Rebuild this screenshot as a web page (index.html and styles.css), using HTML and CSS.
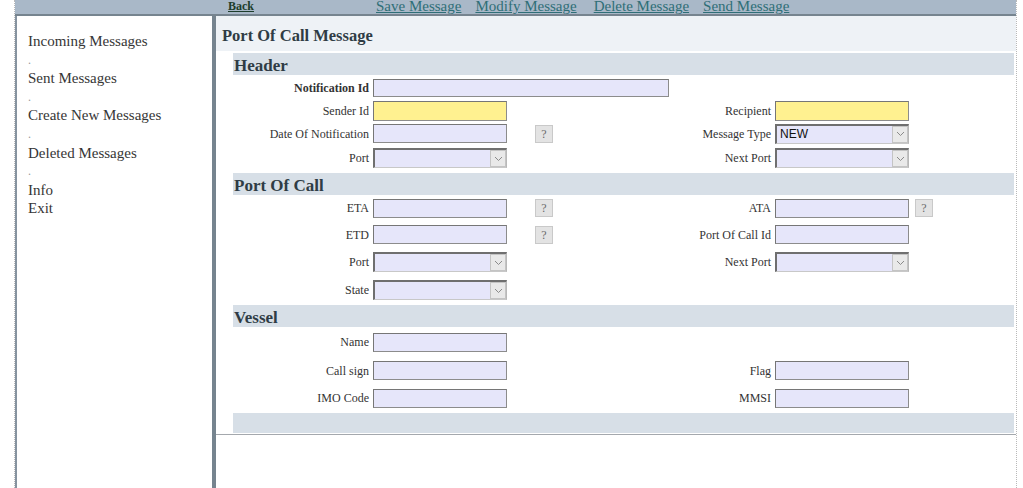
FILE: index.html
```html
<!DOCTYPE html>
<html lang="en">
<head>
<meta charset="utf-8">
<title>Port Of Call Message</title>
<link rel="stylesheet" href="styles.css">
</head>
<body>
<div class="page">
  <div class="topbar">
    <a class="nav-back" href="#">Back</a>
    <nav class="nav-actions">
      <a class="nav-link" href="#">Save Message</a>
      <a class="nav-link" href="#">Modify Message</a>
      <a class="nav-link nav-link-wide" href="#">Delete Message</a>
      <a class="nav-link" href="#">Send Message</a>
    </nav>
  </div>
  <div class="layout">
    <aside class="sidebar">
      <a class="side-item" href="#">Incoming Messages</a>
      <span class="side-dot">.</span>
      <a class="side-item" href="#">Sent Messages</a>
      <span class="side-dot">.</span>
      <a class="side-item" href="#">Create New Messages</a>
      <span class="side-dot">.</span>
      <a class="side-item" href="#">Deleted Messages</a>
      <span class="side-dot">.</span>
      <a class="side-item" href="#">Info</a>
      <a class="side-item" href="#">Exit</a>
    </aside>
    <main class="main">
      <div class="title-band"><h1 class="title">Port Of Call Message</h1></div>
      <div class="form">
        <section class="section">
          <h2 class="section-bar">Header</h2>
          <div class="fields rows-header">
            <label class="c-label1 strong">Notification Id</label>
            <input class="c-input1 field field-long" type="text">

            <label class="c-label1">Sender Id</label>
            <input class="c-input1 field field-req" type="text">
            <label class="c-label2">Recipient</label>
            <input class="c-input2 field field-req" type="text">

            <label class="c-label1">Date Of Notification</label>
            <input class="c-input1 field" type="text">
            <button class="c-help1 help" type="button">?</button>
            <label class="c-label2">Message Type</label>
            <div class="c-input2 select"><span class="select-value">NEW</span><span class="select-arrow"><svg width="9" height="6" viewBox="0 0 9 6"><path d="M1 1 L4.5 4.5 L8 1" fill="none" stroke="#8a8a8a" stroke-width="1"/></svg></span></div>

            <label class="c-label1">Port</label>
            <div class="c-input1 select"><span class="select-value"></span><span class="select-arrow"><svg width="9" height="6" viewBox="0 0 9 6"><path d="M1 1 L4.5 4.5 L8 1" fill="none" stroke="#8a8a8a" stroke-width="1"/></svg></span></div>
            <label class="c-label2">Next Port</label>
            <div class="c-input2 select"><span class="select-value"></span><span class="select-arrow"><svg width="9" height="6" viewBox="0 0 9 6"><path d="M1 1 L4.5 4.5 L8 1" fill="none" stroke="#8a8a8a" stroke-width="1"/></svg></span></div>
          </div>
        </section>

        <section class="section section-port">
          <h2 class="section-bar">Port Of Call</h2>
          <div class="fields rows-port">
            <label class="c-label1">ETA</label>
            <input class="c-input1 field" type="text">
            <button class="c-help1 help" type="button">?</button>
            <label class="c-label2">ATA</label>
            <input class="c-input2 field" type="text">
            <button class="c-help2 help" type="button">?</button>

            <label class="c-label1">ETD</label>
            <input class="c-input1 field" type="text">
            <button class="c-help1 help" type="button">?</button>
            <label class="c-label2">Port Of Call Id</label>
            <input class="c-input2 field" type="text">

            <label class="c-label1">Port</label>
            <div class="c-input1 select"><span class="select-value"></span><span class="select-arrow"><svg width="9" height="6" viewBox="0 0 9 6"><path d="M1 1 L4.5 4.5 L8 1" fill="none" stroke="#8a8a8a" stroke-width="1"/></svg></span></div>
            <label class="c-label2">Next Port</label>
            <div class="c-input2 select"><span class="select-value"></span><span class="select-arrow"><svg width="9" height="6" viewBox="0 0 9 6"><path d="M1 1 L4.5 4.5 L8 1" fill="none" stroke="#8a8a8a" stroke-width="1"/></svg></span></div>

            <label class="c-label1">State</label>
            <div class="c-input1 select"><span class="select-value"></span><span class="select-arrow"><svg width="9" height="6" viewBox="0 0 9 6"><path d="M1 1 L4.5 4.5 L8 1" fill="none" stroke="#8a8a8a" stroke-width="1"/></svg></span></div>
          </div>
        </section>

        <section class="section section-vessel">
          <h2 class="section-bar">Vessel</h2>
          <div class="fields rows-vessel">
            <label class="c-label1">Name</label>
            <input class="c-input1 field" type="text">

            <label class="c-label1">Call sign</label>
            <input class="c-input1 field" type="text">
            <label class="c-label2">Flag</label>
            <input class="c-input2 field" type="text">

            <label class="c-label1">IMO Code</label>
            <input class="c-input1 field" type="text">
            <label class="c-label2">MMSI</label>
            <input class="c-input2 field" type="text">
          </div>
        </section>

        <div class="footer-bar"></div>
      </div>
    </main>
  </div>
</div>
</body>
</html>
```

FILE: styles.css
```css
* { box-sizing: border-box; }

html, body {
  margin: 0;
  padding: 0;
  background: #ffffff;
}

body {
  font-family: "Liberation Serif", "Times New Roman", serif;
  color: #333333;
}

.page {
  margin-left: 14px;
  width: 1003px;
  min-height: 488px;
  border-left: 1px dotted #b9b9b9;
  border-right: 1px dotted #b9b9b9;
  display: flex;
  flex-direction: column;
}

/* top navigation bar */
.topbar {
  height: 16px;
  background: #a9b8c8;
  border-bottom: 2px solid #76848f;
  display: flex;
  align-items: flex-start;
  padding-left: 213px;
}

.nav-back {
  font-size: 12px;
  font-weight: bold;
  line-height: 13px;
  color: #1d3d2c;
  text-decoration: underline;
}

.nav-actions {
  display: flex;
  margin-left: 122px;
  gap: 14px;
}

.nav-link {
  font-size: 15px;
  line-height: 13px;
  color: #2f6f77;
  text-decoration: underline;
  text-underline-offset: 1px;
}

.nav-link-wide { margin-left: 3px; }

/* body layout */
.layout {
  flex: 1;
  display: flex;
}

.sidebar {
  width: 201px;
  flex: none;
  border-left: 2px solid #8693a0;
  border-right: 4px solid #76848f;
  padding: 16px 0 0 11px;
  display: flex;
  flex-direction: column;
}

.side-item,
.side-dot {
  font-size: 15px;
  line-height: 18.6px;
  color: #363636;
  text-decoration: none;
}

.side-dot {
  color: #9a9a9a;
  font-size: 12px;
}

.main {
  flex: 1;
  display: flex;
  flex-direction: column;
  min-width: 0;
}

.title-band {
  background: #eef2f6;
  height: 35px;
  padding: 10px 0 0 6px;
  margin-bottom: 2px;
}

.title {
  margin: 0;
  font-size: 16.5px;
  line-height: 20px;
  font-weight: bold;
  color: #2f3c45;
}

.form {
  padding: 0 2px 1px 17px;
  border-bottom: 1px solid #a4a8ad;
}

.section-bar {
  margin: 0;
  height: 22px;
  background: #d7dfe7;
  padding: 3px 0 0 1px;
  font-size: 17px;
  line-height: 19px;
  font-weight: bold;
  color: #2f3c45;
}

.section { margin-bottom: 3px; }
.section-port { margin-bottom: 1px; }
.section-vessel { margin-bottom: 1px; }

.footer-bar {
  height: 20px;
  background: #d7dfe7;
}

/* field grid */
.fields {
  display: grid;
  grid-template-columns: 140px 134px 28px 18px 222px 134px 6px 18px 80px;
  align-items: center;
}

.rows-header { grid-template-rows: 25px 21px 25px 24px; }
.rows-port   { grid-template-rows: 26px 27px 28px 28px; }
.rows-vessel { grid-template-rows: 30px 27px 28px; }

.c-label1 { grid-column: 1; }
.c-input1 { grid-column: 2; }
.c-help1  { grid-column: 4; }
.c-label2 { grid-column: 5; }
.c-input2 { grid-column: 6; }
.c-help2  { grid-column: 8; }

.c-label1,
.c-label2 {
  text-align: right;
  padding-right: 4px;
  font-size: 12px;
  line-height: 14px;
  color: #333333;
  white-space: nowrap;
}

.strong { font-weight: bold; }

.field {
  display: block;
  width: 134px;
  height: 19px;
  margin: 0;
  padding: 0 3px;
  background: #e6e6fa;
  border: 1px solid #8c8c8c;
  border-top-color: #767676;
  border-left-color: #767676;
  border-radius: 0;
  font-size: 12px;
  outline: none;
}

.field-long {
  width: 296px;
  height: 18px;
  grid-column: 2 / span 4;
}

.field-req { background: #fff190; height: 20px; }

.help {
  width: 18px;
  height: 18px;
  margin: 0;
  padding: 0;
  background: #e3e3e3;
  border: 1px solid #c9c9c9;
  border-radius: 0;
  font-family: "Liberation Serif", serif;
  font-size: 12px;
  line-height: 16px;
  color: #6a6a6a;
  text-align: center;
}

.select {
  width: 134px;
  height: 20px;
  background: #e6e6fa;
  border-top: 2px solid #6f6f6f;
  border-left: 2px solid #6f6f6f;
  border-right: 1px solid #b8b8b8;
  border-bottom: 1px solid #c8c8c8;
  display: flex;
  align-items: stretch;
}

.select-value {
  flex: 1;
  font-family: "Liberation Sans", Arial, sans-serif;
  font-size: 12px;
  line-height: 17px;
  color: #111111;
  padding-left: 3px;
}

.select-arrow {
  width: 16px;
  background: #e9e9e9;
  border: 1px solid #c4c4c4;
  display: flex;
  align-items: center;
  justify-content: center;
}
```
